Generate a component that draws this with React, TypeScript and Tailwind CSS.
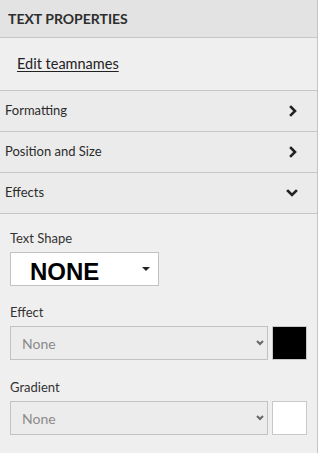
import React from "react";

const font = { fontFamily: "Lato, 'Open Sans', sans-serif" };

const ChevronRight = () => (
  <svg width="10" height="12" viewBox="0 0 10 12" fill="none">
    <polyline points="3,2 7,6 3,10" stroke="#222" strokeWidth="2.6" strokeLinecap="square" />
  </svg>
);

const ChevronDown = () => (
  <svg width="12" height="10" viewBox="0 0 12 10" fill="none">
    <polyline points="2,3 6,7 10,3" stroke="#222" strokeWidth="2.6" strokeLinecap="square" />
  </svg>
);

const Row = ({ label, open }: { label: string; open?: boolean }) => (
  <div className="flex h-[41px] items-center justify-between border-b border-[#c6c6c6] bg-[#ebebeb] pl-[5px] pr-[19px]">
    <span className="text-[13px] text-[#2b2b2b]">{label}</span>
    {open ? <ChevronDown /> : <ChevronRight />}
  </div>
);

const GraySelect = ({ swatch }: { swatch: string }) => (
  <div className="mt-[5px] flex gap-[4px]">
    <div className="flex h-[34px] w-[260px] items-center justify-between border border-[#c2c2c2] bg-[#ececec] pl-[11px] pr-[2px]">
      <span className="text-[14px] text-[#8a8a8a]">None</span>
      <svg width="10" height="8" viewBox="0 0 10 8" fill="none">
        <polyline points="2,2 5,5 8,2" stroke="#666" strokeWidth="2" />
      </svg>
    </div>
    <div className={`h-[34px] w-[35px] border border-[#c8c8c8] ${swatch}`} />
  </div>
);

export default function App() {
  return (
    <div className="h-[453px] w-[319px] bg-white" style={font}>
      <div className="h-full w-[318px] border-r border-[#c4c4c4] bg-[#efefef]">
        <div className="flex h-[38px] items-center border-b border-[#c6c6c6] bg-[#e3e3e3] px-[8px]">
          <span className="text-[14px] font-bold text-[#2e2e2e]">TEXT PROPERTIES</span>
        </div>
        <div className="flex h-[53px] items-center border-b border-[#c6c6c6] pl-[17px]">
          <span className="text-[14.5px] text-[#222] underline underline-offset-2">Edit teamnames</span>
        </div>
        <Row label="Formatting" />
        <Row label="Position and Size" />
        <Row label="Effects" open />
        <div className="flex flex-col px-[10px] pt-[15px]">
          <span className="text-[13px] leading-[18px] text-[#333]">Text Shape</span>
          <div className="mt-[5px] flex h-[34px] w-[149px] items-center justify-between border border-[#c2c2c2] bg-white pl-[19px] pr-[8px]">
            <span
              className="pt-[5px] text-[24px] font-bold leading-none text-black"
              style={{ fontFamily: "'Liberation Sans', Arial, sans-serif" }}
            >
              NONE
            </span>
            <svg width="8" height="5" viewBox="0 0 8 5">
              <polygon points="0,0 8,0 4,4" fill="#222" />
            </svg>
          </div>
          <span className="mt-[17px] text-[13px] leading-[18px] text-[#333]">Effect</span>
          <GraySelect swatch="bg-black" />
          <span className="mt-[18px] text-[13px] leading-[18px] text-[#333]">Gradient</span>
          <GraySelect swatch="bg-white" />
        </div>
      </div>
    </div>
  );
}
